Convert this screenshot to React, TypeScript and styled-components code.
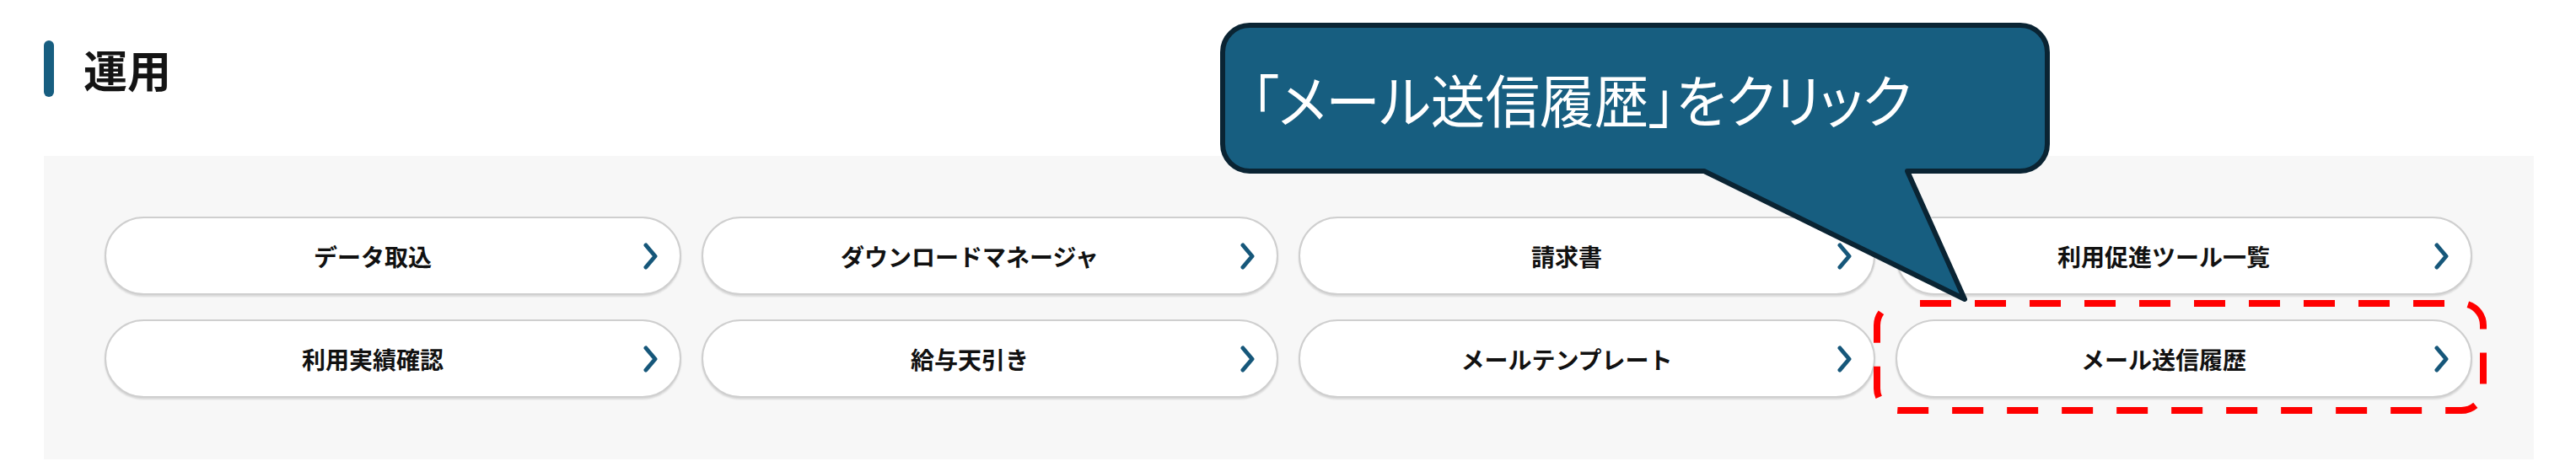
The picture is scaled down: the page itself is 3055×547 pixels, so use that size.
import React from "react"
import styled, { createGlobalStyle } from "styled-components"

const GlobalStyle = createGlobalStyle`
    html, body {
        margin: 0;
        padding: 0;
        background: #ffffff;
    }
    body {
        font-family: "Noto Sans CJK JP", "Noto Sans", sans-serif;
        color: #1a1a1a;
    }
`

const color = {
    navy: "#175e80",
    navyDark: "#0a2433",
    chevron: "#16577a",
    panel: "#f7f7f7",
    border: "#cfcfcf",
    red: "#ff0000",
}

const Page = styled.div`
    position: relative;
    width: 3055px;
    height: 547px;
    padding: 48px 50px 0 52px;
    box-sizing: border-box;
    overflow: hidden;
`

const Heading = styled.div`
    display: flex;
    align-items: center;
    gap: 35px;
    height: 67px;
`

const HeadingBar = styled.span`
    width: 12px;
    height: 67px;
    border-radius: 6px;
    background-color: ${color.navy};
`

const HeadingText = styled.h2`
    margin: 0;
    font-size: 52px;
    font-weight: 700;
    line-height: 1;
    color: #141414;
`

const Panel = styled.div`
    margin-top: 70px;
    background-color: ${color.panel};
    padding: 72px 73px 73px 72px;
    display: grid;
    grid-template-columns: repeat(4, 1fr);
    column-gap: 24px;
    row-gap: 29px;
`

const Cell = styled.div`
    position: relative;
`

const MenuButton = styled.div`
    height: 93px;
    box-sizing: border-box;
    border: 2px solid ${color.border};
    border-radius: 47px;
    background-color: #ffffff;
    box-shadow: 0 2px 2px rgba(0, 0, 0, 0.12);
    display: flex;
    align-items: center;
    gap: 16px;
    padding: 0 24px 0 12px;
    cursor: pointer;
`

const Label = styled.span`
    flex: 1;
    text-align: center;
    font-size: 28px;
    font-weight: 700;
    color: #111111;
`

const Highlight = styled.svg`
    position: absolute;
    left: -26px;
    top: -23px;
    width: 727px;
    height: 135px;
    pointer-events: none;
    overflow: visible;
`

const Callout = styled.div`
    position: absolute;
    left: 1447px;
    top: 27px;
    width: 984px;
    height: 333px;
    z-index: 3;
`

const CalloutShape = styled.svg`
    position: absolute;
    inset: 0;
    width: 984px;
    height: 333px;
`

const CalloutText = styled.div`
    position: relative;
    height: 179px;
    display: flex;
    align-items: center;
    padding-left: 37px;
    box-sizing: border-box;
`

const CalloutLabel = styled.span`
    display: inline-block;
    font-size: 68px;
    font-weight: 400;
    line-height: 1;
    color: #ffffff;
    white-space: nowrap;
    font-feature-settings: "palt";
    transform: scaleX(0.95);
    transform-origin: left center;
`

const Chevron = () => (
    <svg width="20" height="32" viewBox="0 0 20 32">
        <polyline points="4,3 15,16 4,29" fill="none" stroke={color.chevron} strokeWidth="5" strokeLinecap="round" strokeLinejoin="round"/>
    </svg>
)

const items = [
    "データ取込",
    "ダウンロードマネージャ",
    "請求書",
    "利用促進ツール一覧",
    "利用実績確認",
    "給与天引き",
    "メールテンプレート",
    "メール送信履歴",
]

const bubblePath = (() => {
    const r = 32
    const l = 3, t = 3, rt = 981, b = 176
    return [
        `M${l + r},${t}`,
        `H${rt - r}`,
        `A${r},${r} 0 0 1 ${rt},${t + r}`,
        `V${b - r}`,
        `A${r},${r} 0 0 1 ${rt - r},${b}`,
        `H815`,
        `L883,328`,
        `L574,${b}`,
        `H${l + r}`,
        `A${r},${r} 0 0 1 ${l},${b - r}`,
        `V${t + r}`,
        `A${r},${r} 0 0 1 ${l + r},${t}`,
        "Z",
    ].join(" ")
})()

export default function App() {
    return (
        <>
            <GlobalStyle/>
            <Page>
                <Heading>
                    <HeadingBar/>
                    <HeadingText>運用</HeadingText>
                </Heading>
                <Panel>
                    {items.map((item)=>(
                        <Cell key={item}>
                            <MenuButton>
                                <Label>{item}</Label>
                                <Chevron/>
                            </MenuButton>
                            {item == "メール送信履歴" &&
                                <Highlight viewBox="0 0 727 135">
                                    <rect x="4" y="4" width="719" height="127" rx="26" fill="none"
                                        stroke={color.red} strokeWidth="8" strokeDasharray="37 28" strokeDashoffset="40"/>
                                </Highlight>
                            }
                        </Cell>
                    ))}
                </Panel>
                <Callout>
                    <CalloutShape viewBox="0 0 984 333">
                        <path d={bubblePath} fill={color.navy} stroke={color.navyDark} strokeWidth="6" strokeLinejoin="round"/>
                    </CalloutShape>
                    <CalloutText>
                        <CalloutLabel>「メール送信履歴」をクリック</CalloutLabel>
                    </CalloutText>
                </Callout>
            </Page>
        </>
    )
}
